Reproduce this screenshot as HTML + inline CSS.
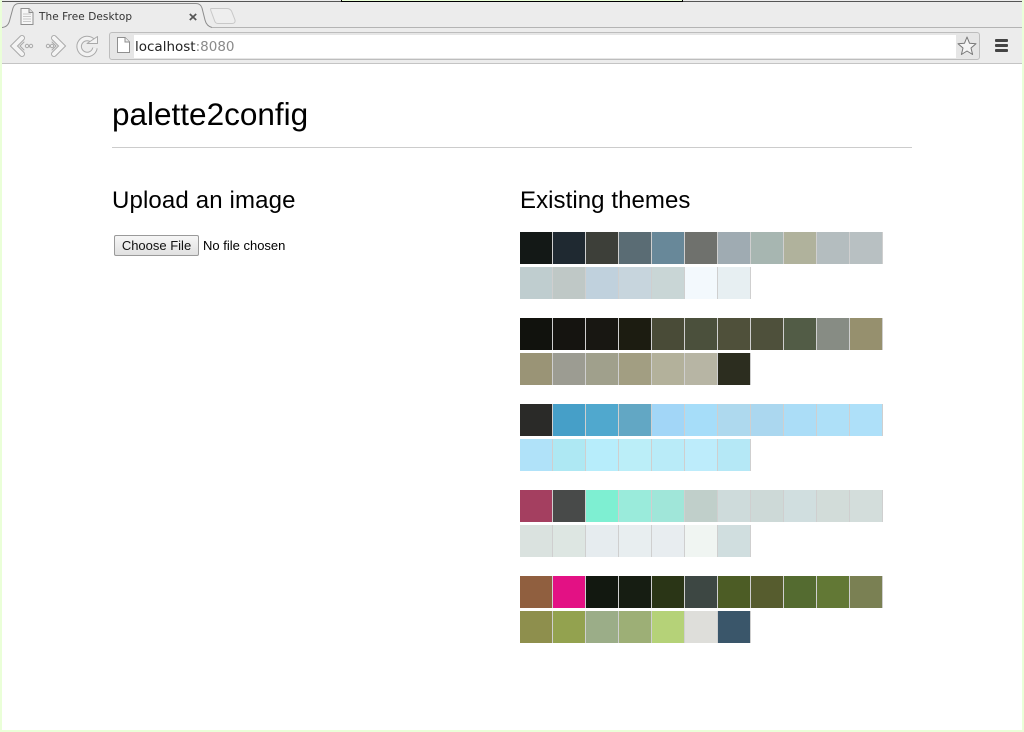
<!DOCTYPE html>
<html><head><meta charset="utf-8"><title>palette2config</title>
<style>
html,body{margin:0;padding:0;background:#fff}
body{width:1024px;height:732px;position:relative;overflow:hidden;font-family:"Liberation Sans",sans-serif;color:#000}
.abs{position:absolute}
.frame{background:#eaffd8}
h1,h2{position:absolute;margin:0;font-weight:400;white-space:nowrap}
.row{position:absolute;left:520px;display:flex;height:32px}
.row i{display:block;width:32px;height:32px;border-right:1px solid #cfcfcf}
</style></head><body>
<div class="abs" style="left:0;top:0;width:1024px;height:64px;background:#ececec"></div>
<div class="abs" style="left:0;top:1px;width:1024px;height:1px;background:#555"></div>
<div class="abs" style="left:341px;top:0;width:342px;height:1px;background:#eaffd8"></div>
<div class="abs" style="left:341px;top:0;width:1px;height:2px;background:#000"></div>
<div class="abs" style="left:682px;top:0;width:1px;height:2px;background:#000"></div>
<div class="abs" style="left:341px;top:1px;width:342px;height:1px;background:#000"></div>
<div class="abs" style="left:0;top:27px;width:1024px;height:1px;background:#b4b4b4"></div>
<div class="abs" style="left:0;top:63px;width:1024px;height:1px;background:#c4c4c4"></div>

<svg class="abs" style="left:0;top:0" width="240" height="30" viewBox="0 0 240 30">
<path d="M2 28C7 27 9 24 10 19L13 8C14 5 16 3.500 19 3.500H196C199 3.500 201 5 202 8L205 20C206 24 208 26 212 27.500V28Z" fill="#ececec"/>
<path d="M2 27.500C7 27 9 24 10 19L13 8C14 5 16 3.500 19 3.500H196C199 3.500 201 5 202 8L205 20C206 24 208 26.500 212 27.500" fill="none" stroke="#8c8c8c" stroke-width="1"/>
<path d="M211 8.500H227C229.500 8.500 230.500 9.500 231.500 11L235 20C235.500 22.500 234 23.500 232 23.500H218C216 23.500 215 22.500 214.500 20.500L211 11C210.500 9.500 210.500 8.500 211 8.500Z" fill="#eeeeee" stroke="#c8c8c8"/>
<path d="M21 8.500H29L33 12.500V24.500H21Z" fill="#f6f6f6" stroke="#8e8e8e"/>
<path d="M29 8.500V12.500H33" fill="#ddd" stroke="#8e8e8e"/>
<path d="M23 14H31M23 16.500H31M23 19H31M23 21.500H31" stroke="#c8c8c8"/>
<path d="M189.800 14L196.200 20M196.200 14L189.800 20" stroke="#555" stroke-width="1.700"/>
</svg>
<div class="abs" style="left:39px;top:10px;line-height:14px;letter-spacing:.08px;color:#333;font-family:'DejaVu Sans',sans-serif;font-size:10.500px;white-space:nowrap">The Free Desktop</div>

<svg class="abs" style="left:8px;top:32px" width="96" height="28" viewBox="0 0 96 28">
<g fill="none" stroke-linejoin="miter" stroke-linecap="round">
<path d="M14 6L6 14L14 22" stroke="#a9a9a9" stroke-width="6"/>
<path d="M14 6L6 14L14 22" stroke="#f4f4f4" stroke-width="4"/>
<path d="M16 10L12 14L16 18" stroke="#a9a9a9" stroke-width="1"/>
<path d="M46 6L54 14L46 22" stroke="#a9a9a9" stroke-width="6"/>
<path d="M46 6L54 14L46 22" stroke="#f4f4f4" stroke-width="4"/>
<path d="M44 10L48 14L44 18" stroke="#a9a9a9" stroke-width="1"/>
</g>
<g fill="none" stroke="#aaa"><circle cx="19" cy="14" r="1.700"/><circle cx="23" cy="14" r="1.700"/><circle cx="40" cy="14" r="1.700"/><circle cx="44" cy="14" r="1.700"/></g>
<path d="M85 9A8 8 0 1 0 87 16" fill="none" stroke="#a9a9a9" stroke-width="5.500"/>
<path d="M85 9A8 8 0 1 0 87 16" fill="none" stroke="#f2f2f2" stroke-width="3.500"/>
<path d="M79 11.500H89.500V4.500Z" fill="#f2f2f2" stroke="#a9a9a9" stroke-linejoin="round"/>
</svg>

<div class="abs" style="left:109px;top:32px;width:869px;height:26px;border:1px solid #bdbdbd;border-radius:3px;background:#e6e6e6"></div>
<div class="abs" style="left:134px;top:35px;width:822px;height:23px;background:#fff"></div>
<svg class="abs" style="left:116px;top:36px" width="16" height="18" viewBox="0 0 16 18"><path d="M1.500 1.500H9L13.500 6V16.500H1.500Z" fill="#fff" stroke="#8f8f8f"/><path d="M9 1.500V6H13.500" fill="#eee" stroke="#8f8f8f"/></svg>
<div class="abs" style="left:135px;top:39px;font-family:'DejaVu Sans',sans-serif;font-size:13.500px;line-height:16px;white-space:nowrap;color:#222">localhost<span style="color:#8a8a8a">:8080</span></div>
<svg class="abs" style="left:956px;top:35px" width="22" height="22" viewBox="0 0 22 22"><path d="M11 2L13.500 8.200L20 8.700L15 13L16.600 19.500L11 16L5.400 19.500L7 13L2 8.700L8.500 8.200Z" fill="#f4f4f4" stroke="#777" stroke-linejoin="round"/></svg>
<div class="abs" style="left:995px;top:39px;width:13px;height:3px;background:#444;border-radius:1px"></div>
<div class="abs" style="left:995px;top:44px;width:13px;height:3px;background:#444;border-radius:1px"></div>
<div class="abs" style="left:995px;top:49px;width:13px;height:3px;background:#444;border-radius:1px"></div>

<div class="abs frame" style="left:0;top:0;width:2px;height:732px"></div>
<div class="abs frame" style="left:1022px;top:0;width:2px;height:732px"></div>
<div class="abs frame" style="left:0;top:730px;width:1024px;height:2px"></div>

<h1 style="left:112px;top:95px;font-size:31.500px;line-height:38px">palette2config</h1>
<div class="abs" style="left:112px;top:147px;width:800px;height:1px;background:#ccc"></div>
<h2 style="left:112px;top:186px;font-size:24px;letter-spacing:.14px;line-height:29px">Upload an image</h2>
<h2 style="left:520px;top:186px;font-size:24px;letter-spacing:.07px;line-height:29px">Existing themes</h2>

<div class="abs" style="left:114px;top:235px;width:83px;height:19px;border:1px solid #9a9a9a;border-radius:2px;background:linear-gradient(#f6f6f6,#e0e0e0);font-size:13px;line-height:19px;text-align:center;color:#111;white-space:nowrap">Choose File</div>
<div class="abs" style="left:203px;top:237px;font-size:13px;line-height:17px;white-space:nowrap;color:#000">No file chosen</div>

<div class="row" style="top:232px"><i style="background:#131816"></i><i style="background:#1f2931"></i><i style="background:#3d3f39"></i><i style="background:#5a6c74"></i><i style="background:#688899"></i><i style="background:#6f716d"></i><i style="background:#9fabb2"></i><i style="background:#a7b6b1"></i><i style="background:#b0b29c"></i><i style="background:#b4bdbf"></i><i style="background:#b8c0c2"></i></div>
<div class="row" style="top:267px"><i style="background:#bfcdcf"></i><i style="background:#bfc8c6"></i><i style="background:#c0d1dd"></i><i style="background:#c7d5dd"></i><i style="background:#c9d6d6"></i><i style="background:#f3f9fd"></i><i style="background:#e7eff2"></i></div>

<div class="row" style="top:318px"><i style="background:#11120d"></i><i style="background:#151410"></i><i style="background:#181712"></i><i style="background:#1c1c11"></i><i style="background:#494b37"></i><i style="background:#4b503c"></i><i style="background:#4f503a"></i><i style="background:#4e503b"></i><i style="background:#525c46"></i><i style="background:#878c84"></i><i style="background:#96906e"></i></div>
<div class="row" style="top:353px"><i style="background:#9a9476"></i><i style="background:#9c9c92"></i><i style="background:#a0a08c"></i><i style="background:#a29e82"></i><i style="background:#b3b19b"></i><i style="background:#b7b5a4"></i><i style="background:#2c2d1f"></i></div>

<div class="row" style="top:404px"><i style="background:#2a2a28"></i><i style="background:#469fc8"></i><i style="background:#50a8ce"></i><i style="background:#62a7c4"></i><i style="background:#a2d6f7"></i><i style="background:#a6ddf9"></i><i style="background:#aed9ee"></i><i style="background:#abd7ef"></i><i style="background:#abddf7"></i><i style="background:#aee0f8"></i><i style="background:#aee0f9"></i></div>
<div class="row" style="top:439px"><i style="background:#b0e2f9"></i><i style="background:#aee8f3"></i><i style="background:#b7edfb"></i><i style="background:#bbeef8"></i><i style="background:#b9ebf8"></i><i style="background:#bdecfb"></i><i style="background:#b5e8f6"></i></div>

<div class="row" style="top:490px"><i style="background:#a43f60"></i><i style="background:#484a49"></i><i style="background:#7eefd2"></i><i style="background:#9aebdb"></i><i style="background:#a0e6d9"></i><i style="background:#c0cfca"></i><i style="background:#cedbdb"></i><i style="background:#cdd9d7"></i><i style="background:#d0dedf"></i><i style="background:#d2dcd9"></i><i style="background:#d3dddb"></i></div>
<div class="row" style="top:525px"><i style="background:#dae2df"></i><i style="background:#dde6e2"></i><i style="background:#e6ecef"></i><i style="background:#e8eef0"></i><i style="background:#e8edf0"></i><i style="background:#f0f5f2"></i><i style="background:#d0dedf"></i></div>

<div class="row" style="top:576px"><i style="background:#905f3f"></i><i style="background:#e31184"></i><i style="background:#121810"></i><i style="background:#161d12"></i><i style="background:#2a3516"></i><i style="background:#3d4743"></i><i style="background:#4c5c25"></i><i style="background:#565c2e"></i><i style="background:#546b30"></i><i style="background:#627835"></i><i style="background:#7a8053"></i></div>
<div class="row" style="top:611px"><i style="background:#8e8f4d"></i><i style="background:#93a24f"></i><i style="background:#9bad88"></i><i style="background:#9daf76"></i><i style="background:#b5d278"></i><i style="background:#dededa"></i><i style="background:#3a566a"></i></div>
</body></html>
